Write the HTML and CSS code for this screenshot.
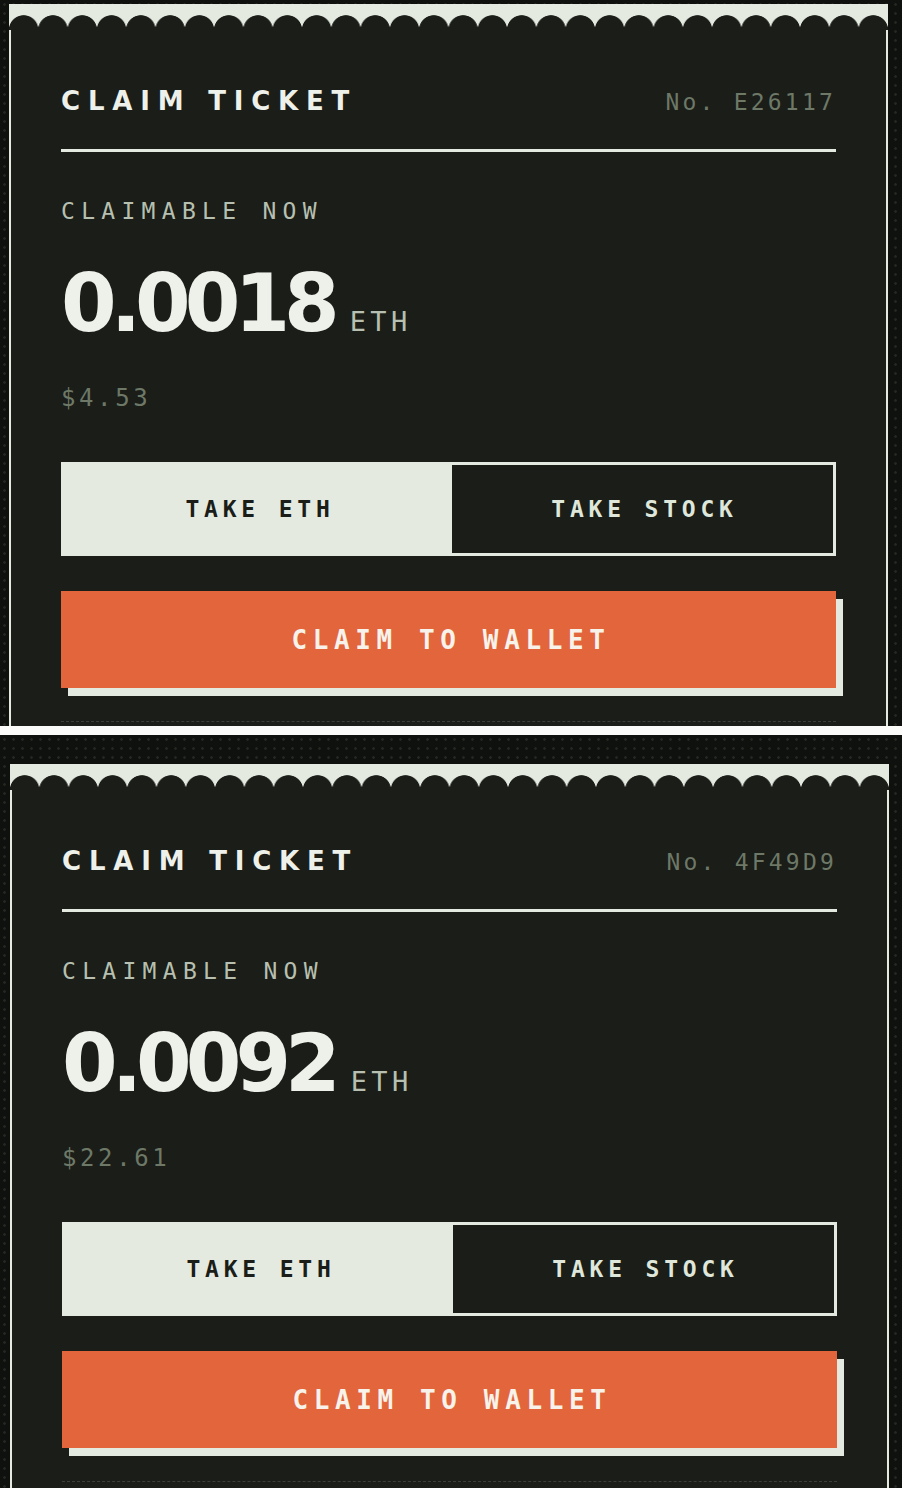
FILE: index.html
```html
<!DOCTYPE html>
<html lang="en">
<head>
  <meta charset="UTF-8">
  <title>Claim Ticket</title>
  <link rel="stylesheet" href="styles.css">
</head>
<body>

  <div class="frame frame-first">
    <div class="ticket">
      <div class="ticket-edge"></div>
      <div class="ticket-body">
        <div class="ticket-head">
          <h2 class="ticket-title">CLAIM TICKET</h2>
          <span class="ticket-no">No. E26117</span>
        </div>

        <div class="label">CLAIMABLE NOW</div>
        <div class="amount">
          <span class="amount-value">0.0018</span>
          <span class="amount-unit">ETH</span>
        </div>
        <div class="fiat">$4.53</div>

        <div class="toggle">
          <button class="toggle-opt active">TAKE ETH</button>
          <button class="toggle-opt">TAKE STOCK</button>
        </div>

        <button class="claim-btn">CLAIM TO WALLET</button>

        <div class="tear"></div>
      </div>
    </div>
  </div>

  <div class="frame frame-second">
    <div class="ticket">
      <div class="ticket-edge"></div>
      <div class="ticket-body">
        <div class="ticket-head">
          <h2 class="ticket-title">CLAIM TICKET</h2>
          <span class="ticket-no">No. 4F49D9</span>
        </div>

        <div class="label">CLAIMABLE NOW</div>
        <div class="amount">
          <span class="amount-value">0.0092</span>
          <span class="amount-unit">ETH</span>
        </div>
        <div class="fiat">$22.61</div>

        <div class="toggle">
          <button class="toggle-opt active">TAKE ETH</button>
          <button class="toggle-opt">TAKE STOCK</button>
        </div>

        <button class="claim-btn">CLAIM TO WALLET</button>

        <div class="tear"></div>
      </div>
    </div>
  </div>

</body>
</html>
```

FILE: styles.css
```css
body {
  margin: 0;
  background: #fbfcfa;
  font-family: "DejaVu Sans Mono", "Liberation Mono", monospace;
}
.frame {
  overflow: hidden;
  background-color: #0f110e;
  background-image: radial-gradient(circle, #232720 1px, transparent 1.6px);
  background-size: 9px 9px;
}
.frame-first {
  height: 726px;
  padding-top: 4px;
  box-sizing: border-box;
}
.frame-second {
  height: 753px;
  margin-top: 9px;
  padding-top: 29px;
  box-sizing: border-box;
}
.frame-second .ticket {
  margin-left: 10px;
}
.ticket {
  width: 879px;
  margin-left: 9px;
}
.ticket-edge {
  height: 26px;
  background-color: #e5eae1;
  background-image: radial-gradient(circle at 50% 100%, #1a1d18 14.4px, transparent 15.1px);
  background-size: calc(100% / 30) 26px;
}
.ticket-body {
  background: #1a1d18;
  border-left: 2px solid #e5eae1;
  border-right: 2px solid #e5eae1;
  padding: 56px 50px 200px;
}
.ticket-head {
  display: flex;
  justify-content: space-between;
  align-items: baseline;
  padding-bottom: 33px;
  border-bottom: 3px solid #e5eae1;
}
.ticket-title {
  margin: 0;
  font-family: "DejaVu Sans", sans-serif;
  font-weight: bold;
  font-size: 26px;
  line-height: 30px;
  letter-spacing: 7.8px;
  color: #eef1ea;
}
.ticket-no {
  font-size: 23px;
  letter-spacing: 3.2px;
  color: #6d7867;
}
.label {
  margin-top: 45px;
  font-size: 23px;
  line-height: 28px;
  letter-spacing: 6.3px;
  color: #b7c0b0;
}
.amount {
  display: flex;
  align-items: baseline;
  margin-top: 39px;
}
.amount-value {
  font-family: "DejaVu Sans", sans-serif;
  font-weight: bold;
  font-size: 80px;
  line-height: 80px;
  letter-spacing: -6px;
  color: #eef1ea;
}
.amount-unit {
  margin-left: 16px;
  font-size: 27px;
  line-height: 30px;
  letter-spacing: 4.4px;
  color: #b7c0b0;
}
.fiat {
  margin-top: 39px;
  font-size: 24px;
  line-height: 30px;
  letter-spacing: 3.6px;
  color: #6d7867;
}
.toggle {
  display: flex;
  margin-top: 49px;
  height: 94px;
  border: 3px solid #e5eae1;
  box-sizing: border-box;
}
.toggle-opt {
  flex: 1;
  border: 0;
  background: transparent;
  font-family: "DejaVu Sans Mono", "Liberation Mono", monospace;
  font-weight: bold;
  font-size: 23px;
  letter-spacing: 4.8px;
  color: #dfe6da;
  padding: 0 0 0 4px;
}
.toggle-opt.active {
  flex: 0 0 388px;
  background: #e5eae1;
  color: #1a1d18;
}
.claim-btn {
  display: block;
  width: 100%;
  height: 97px;
  margin-top: 35px;
  border: 0;
  background: #e2653b;
  box-shadow: 7px 8px 0 #e5eae1;
  font-family: "DejaVu Sans Mono", "Liberation Mono", monospace;
  font-weight: bold;
  font-size: 26px;
  letter-spacing: 5.6px;
  color: #f7f2ea;
  padding: 0 0 0 5px;
}
.tear {
  margin-top: 33px;
  border-top: 1px dashed #3b4037;
}
```
